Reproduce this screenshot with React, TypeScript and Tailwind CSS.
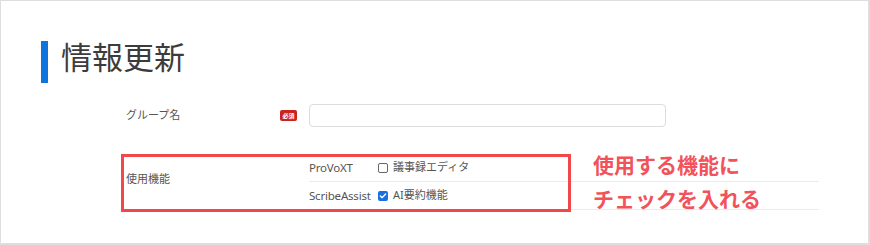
import React from 'react';
import { Check } from 'lucide-react';

const FONT = { fontFamily: '"Noto Sans", "Noto Sans CJK JP", sans-serif' };

const Box: React.FC<{ checked?: boolean }> = ({ checked }) =>
  checked ? (
    <span className="w-[10px] h-[10px] rounded-[2px] bg-[#1a6fe0] flex items-center justify-center">
      <Check size={8} strokeWidth={4} className="text-white" />
    </span>
  ) : (
    <span className="w-[10px] h-[10px] rounded-[2px] border border-[#666] bg-white" />
  );

const FEATURES = [
  { product: 'ProVoXT', label: '議事録エディタ', checked: false },
  { product: 'ScribeAssist', label: 'AI要約機能', checked: true },
];

export default function App() {
  return (
    <div
      style={FONT}
      className="relative w-[870px] h-[245px] bg-white border-t border-l border-r-2 border-b-2 border-[#dedede] overflow-hidden"
    >
      {/* heading */}
      <div className="flex items-start mt-[40px] ml-[40px]">
        <div className="w-[7px] h-[42px] bg-[#0f74dc]" />
        <h1 className="ml-[13px] mt-[1px] text-[31px] leading-none text-[#3c3c3c]">情報更新</h1>
      </div>

      {/* group name */}
      <div className="flex items-center mt-[21px] ml-[125px] h-[23px]">
        <span className="w-[154px] text-[11px] text-[#555]">グループ名</span>
        <span className="w-[17px] h-[11px] rounded-[2px] bg-[#c8231e] text-white text-[6px] font-bold leading-none flex items-center justify-center">
          必須
        </span>
        <div className="ml-[12px] w-[357px] h-[23px] border border-[#dcdcdc] rounded-[4px] bg-white" />
      </div>

      {/* features */}
      <div className="flex mt-[27px] ml-[125px]">
        <div className="w-[183px] flex items-center pb-[6px] text-[11px] text-[#555]">使用機能</div>
        <div className="w-[510px]">
          {FEATURES.map(f => (
            <div key={f.product} className="flex items-center h-[28px] border-b border-[#ebebeb] text-[11px] text-[#555]">
              <span className="w-[69px] text-[11.5px] tracking-[-0.2px]">{f.product}</span>
              <Box checked={f.checked} />
              <span className="ml-[5px]">{f.label}</span>
            </div>
          ))}
        </div>
      </div>

      {/* annotation */}
      <div className="absolute left-[120px] top-[153px] w-[450px] h-[58px] border-[3px] border-[#f2484c]" />
      <div className="absolute left-[592px] top-[147px] text-[21px] leading-[34px] font-bold text-[#f2525a]">
        <p>使用する機能に</p>
        <p>チェックを入れる</p>
      </div>
    </div>
  );
}
